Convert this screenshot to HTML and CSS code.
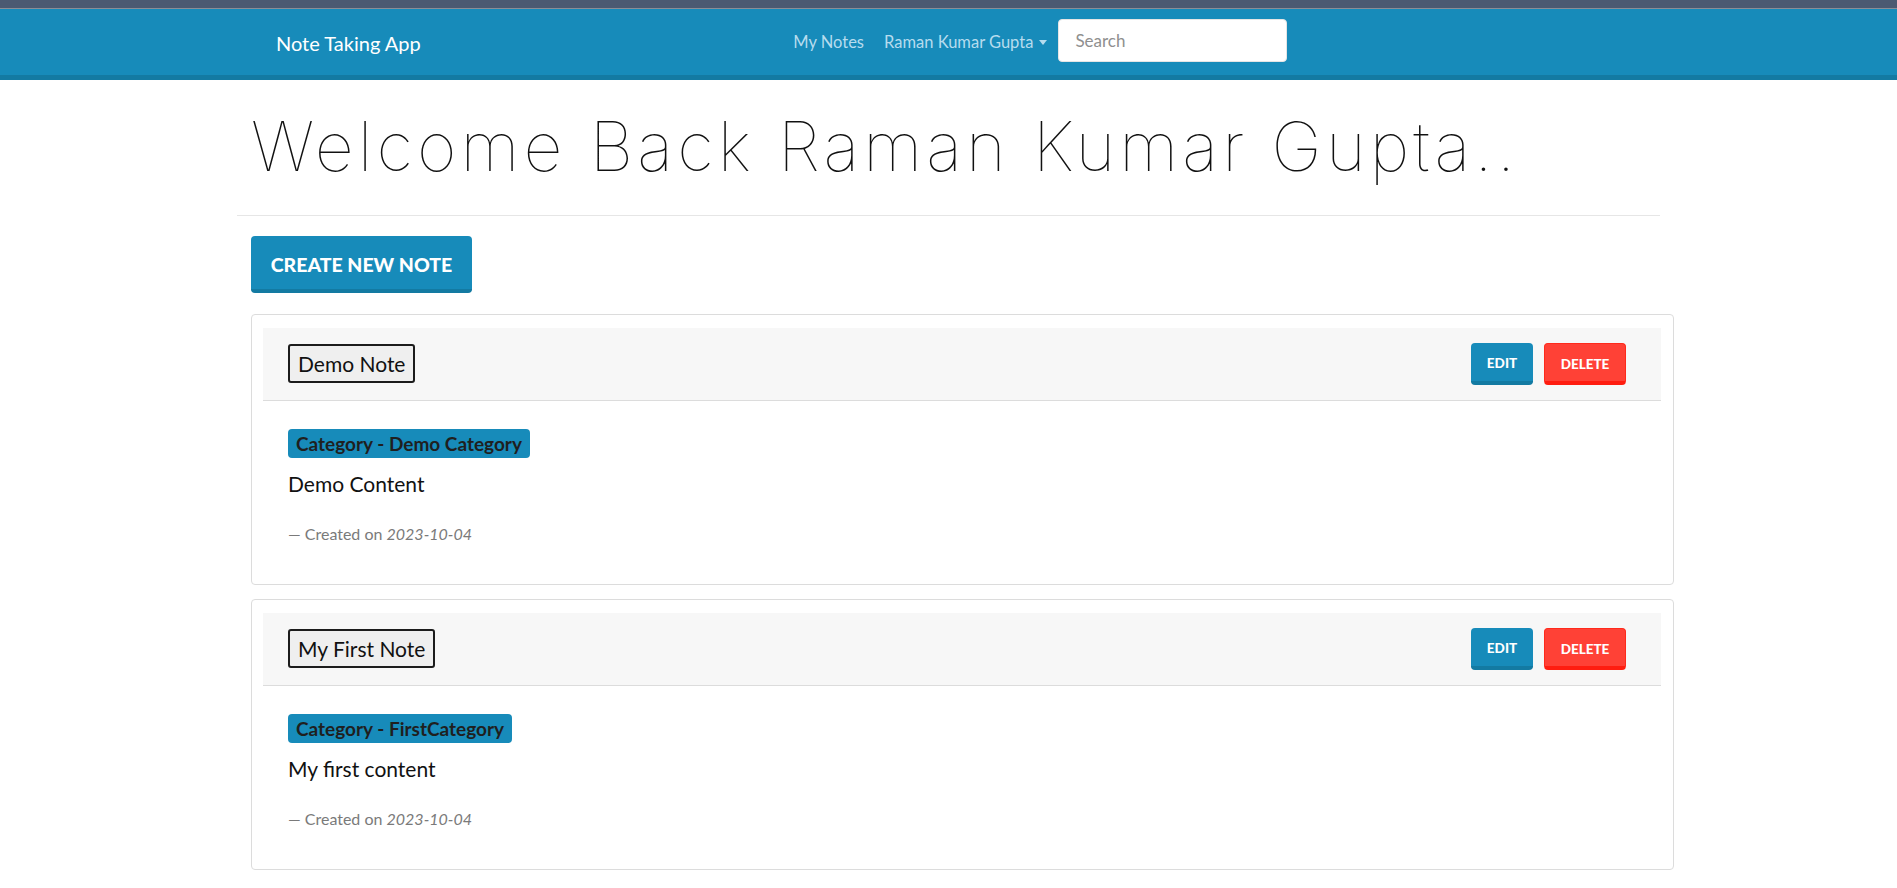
FILE: index.html
```html
<!DOCTYPE html>
<html lang="en">
<head>
<meta charset="utf-8">
<title>Note Taking App</title>
<link rel="stylesheet" href="styles.css">
</head>
<body>
<div class="topstrip"></div>
<header class="navbar">
  <div class="nav-inner">
    <a class="brand" href="#">Note Taking App</a>
    <nav class="nav-group">
      <a class="nav-link" href="#">My Notes</a>
      <a class="nav-link dropdown" href="#">Raman Kumar Gupta<span class="caret"></span></a>
      <input class="search" type="text" placeholder="Search">
    </nav>
  </div>
</header>
<main class="container">
  <div class="content">
    <h1 class="welcome">Welcome Back Raman Kumar Gupta..</h1>
  </div>
  <hr class="divider">
  <div class="content">
    <a class="btn btn-primary btn-lg" href="#">Create New Note</a>
    <div class="notes">
      <section class="card">
        <div class="card-header">
          <h2 class="note-title">Demo Note</h2>
          <div class="actions">
            <a class="btn btn-primary btn-sm" href="#">Edit</a>
            <a class="btn btn-danger btn-sm" href="#">Delete</a>
          </div>
        </div>
        <div class="card-body">
          <span class="badge">Category - Demo Category</span>
          <p class="note-text">Demo Content</p>
          <p class="meta">— Created on <em>2023-10-04</em></p>
        </div>
      </section>
      <section class="card">
        <div class="card-header">
          <h2 class="note-title">My First Note</h2>
          <div class="actions">
            <a class="btn btn-primary btn-sm" href="#">Edit</a>
            <a class="btn btn-danger btn-sm" href="#">Delete</a>
          </div>
        </div>
        <div class="card-body">
          <span class="badge">Category - FirstCategory</span>
          <p class="note-text">My first content</p>
          <p class="meta">— Created on <em>2023-10-04</em></p>
        </div>
      </section>
    </div>
  </div>
</main>
</body>
</html>
```
FILE: styles.css
```css
* { box-sizing: border-box; }
html, body { margin: 0; padding: 0; }
body {
  font-family: "Lato", "Noto Sans", sans-serif;
  color: #222;
  background: #fff;
  overflow: hidden;
}
a { text-decoration: none; }

.topstrip {
  height: 9px;
  background: #4b5a72;
  border-bottom: 1px solid #8a8e96;
}

.navbar {
  height: 71px;
  background: #178bba;
  border-bottom: 5px solid #137aa2;
}
.nav-inner {
  width: 1423px;
  margin: 0 auto;
  height: 66px;
  padding-left: 39px;
  display: flex;
  align-items: center;
}
.brand {
  color: #fff;
  font-size: 20px;
  margin-top: 2px;
}
.nav-group {
  margin: 0 auto;
  display: flex;
  align-items: center;
}
.nav-link {
  color: #b6dcee;
  font-size: 16.5px;
  margin-right: 20px;
  display: flex;
  align-items: center;
}
.nav-link.dropdown { margin-right: 11px; }
.caret {
  display: inline-block;
  margin-left: 6px;
  border-left: 4.5px solid transparent;
  border-right: 4.5px solid transparent;
  border-top: 5px solid #b6dcee;
}
.search {
  width: 229px;
  height: 43px;
  border: 1px solid #e5e5e5;
  border-radius: 4px;
  padding: 0 16px;
  font-family: "Lato", sans-serif;
  font-size: 17px;
  color: #333;
  background: #fff;
  margin-top: -3px;
}
.search::placeholder { color: #8f8f8f; }

.container {
  width: 1423px;
  margin: 0 auto;
}
.content {
  margin-left: 14px;
  margin-right: -14px;
}
.welcome {
  margin: 25px 0 0;
  font-family: "Inter", "Lato", sans-serif;
  font-weight: 100;
  font-size: 68px;
  line-height: 82px;
  color: #111;
  letter-spacing: 4.1px;
}
.divider {
  margin: 28px 0 20px;
  border: 0;
  border-top: 1px solid #e6e6e6;
  height: 0;
}

.btn {
  display: inline-flex;
  align-items: center;
  justify-content: center;
  color: #fff;
  font-weight: 900;
  text-transform: uppercase;
  border-radius: 4px;
  border-bottom: 4px solid transparent;
}
.btn-primary { background: #178bba; border-bottom-color: #137aa2; }
.btn-danger { background: #ff4136; border: 1px solid #ff2a1c; border-bottom: 4px solid #ff1d10; }
.btn-lg {
  width: 221px;
  height: 57px;
  padding: 4px 0 0;
  font-size: 19.5px;
}
.btn-sm {
  height: 42px;
  padding: 3px 0 0;
  font-size: 13.5px;
}
.actions { display: flex; gap: 11px; }
.actions .btn-primary { width: 62px; }
.actions .btn-danger { width: 82px; }

.notes {
  margin-top: 21px;
  display: flex;
  flex-direction: column;
  gap: 14px;
}
.card {
  border: 1px solid #dcdcdc;
  border-radius: 4px;
  padding: 13px 12px 0 11px;
  height: 271px;
}
.card-header {
  height: 73px;
  background: #f7f7f7;
  border-bottom: 1px solid #dcdcdc;
  display: flex;
  align-items: center;
  justify-content: space-between;
  padding: 0 35px 1px 25px;
}
.note-title {
  margin: 0;
  font-weight: 400;
  font-size: 21px;
  height: 39px;
  line-height: 35px;
  padding: 0 8px;
  border: 2px solid #1c1c1c;
  border-radius: 3px;
  background: #efefef;
  color: #111;
}
.card-body {
  padding: 28px 25px 0;
}
.badge {
  display: inline-block;
  height: 29px;
  line-height: 29px;
  padding: 0 8px;
  background: #178bba;
  color: #1f1f1f;
  font-weight: 700;
  font-size: 19px;
  border-radius: 4px;
}
.note-text {
  margin: 10px 0 0;
  font-size: 21px;
  line-height: 31px;
  color: #111;
}
.meta {
  margin: 22px 0 0;
  font-size: 16px;
  line-height: 25px;
  color: #7a7a7a;
}
.meta em { font-style: italic; }
```
